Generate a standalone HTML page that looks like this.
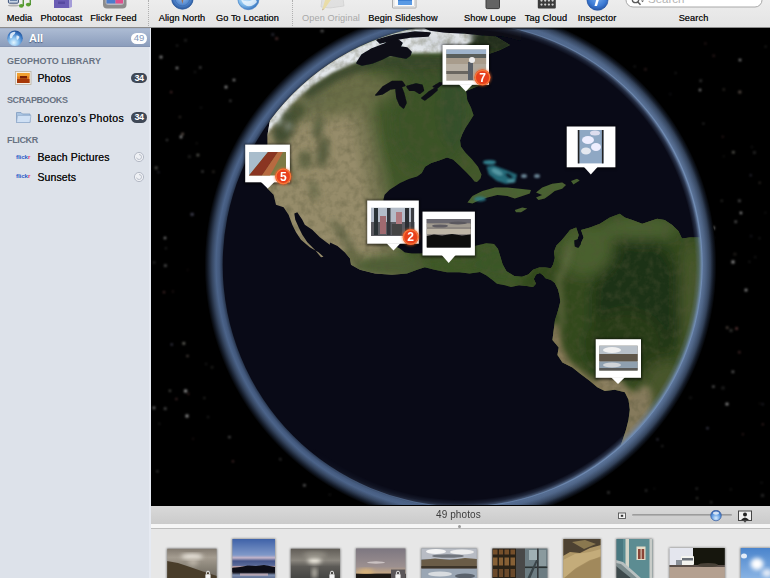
<!DOCTYPE html>
<html><head><meta charset="utf-8"><title>GeoPhoto</title>
<style>
html,body{margin:0;padding:0}
body{width:770px;height:578px;overflow:hidden;position:relative;background:#000;font-family:"Liberation Sans",sans-serif;font-size:11px;color:#111}
.abs{position:absolute}
#toolbar{left:0;top:0;width:770px;height:26.5px;background:linear-gradient(#ededed,#e4e4e4);border-bottom:1px solid #8c8c8c;box-sizing:content-box}
#toolbar .lbl{position:absolute;top:13px;font-size:9.2px;color:#1a1a1a;white-space:nowrap;transform:translateX(-50%);letter-spacing:0.1px;text-shadow:0 0 0.4px #333}
#toolbar .dis{color:#a8a8a8;text-shadow:none}
#toolbar .sep{position:absolute;top:0;height:26px;width:0;border-left:1px dotted #b0b0b0}
#sidebar{left:0;top:28px;width:149px;border-right:2px solid #e6eaf2;height:550px;background:#dde2ea}
.row{position:absolute;left:0;width:150px;white-space:nowrap}
.hdr{position:absolute;left:7px;font-size:9px;font-weight:bold;color:#687282;letter-spacing:0px;white-space:nowrap}
.item{position:absolute;left:37.5px;font-size:10.5px;color:#141414;white-space:nowrap;letter-spacing:0.1px;text-shadow:0 0 0.5px #222}
.badge{position:absolute;left:131px;width:16px;height:10.5px;border-radius:6px;background:#3f4856;color:#fff;font-weight:bold;font-size:9px;line-height:10.5px;text-align:center;letter-spacing:-0.5px}
#status{left:151px;top:505.5px;width:619px;height:18px;background:linear-gradient(#d9d9d9,#cbcbcb);border-bottom:1px solid #9a9a9a}
#split{left:151px;top:524px;width:619px;height:4px;background:#f6f6f6;border-bottom:1px solid #bdbdbd}
#strip{left:151px;top:529px;width:619px;height:49px;background:#e7e7e7}
.th{position:absolute;overflow:hidden;box-shadow:0 0 2px rgba(0,0,0,.5)}
</style></head>
<body>
<!-- TOOLBAR -->
<div id="toolbar" class="abs">
<svg style="position:absolute;left:0;top:0" width="770" height="14" viewBox="0 0 770 14">
<defs>
<filter id="ib" x="-10%" y="-10%" width="120%" height="120%"><feGaussianBlur stdDeviation="0.5"/></filter>
<radialGradient id="an" gradientUnits="userSpaceOnUse" cx="182.4" cy="-3" r="12"><stop offset="0" stop-color="#9ec4f0"/><stop offset="0.7" stop-color="#4f84cc"/><stop offset="1" stop-color="#2c5a9e"/></radialGradient>
<radialGradient id="gg" gradientUnits="userSpaceOnUse" cx="246" cy="-3" r="13"><stop offset="0" stop-color="#e4f4ff"/><stop offset="0.6" stop-color="#86c0ee"/><stop offset="1" stop-color="#3f7cc4"/></radialGradient>
<radialGradient id="ins" gradientUnits="userSpaceOnUse" cx="597.5" cy="-3" r="13"><stop offset="0" stop-color="#7ab0f0"/><stop offset="0.7" stop-color="#3c7ad4"/><stop offset="1" stop-color="#2858a8"/></radialGradient>
</defs>
<g filter="url(#ib)">
<rect x="8.4" y="-3" width="10" height="6.2" rx="1" fill="#c8d4e4" stroke="#3a5078" stroke-width="1"/><rect x="10" y="-3" width="7" height="3.6" fill="#2c4c80"/><ellipse cx="13.5" cy="5.5" rx="5.5" ry="1" fill="#9a9a9a" opacity="0.7"/><ellipse cx="21.3" cy="5.8" rx="2.4" ry="1.9" fill="#5aa030"/><ellipse cx="28.3" cy="4.6" rx="2.4" ry="1.9" fill="#5aa030"/><rect x="22.6" y="-2" width="1.3" height="8" fill="#4a9028"/><rect x="29.6" y="-3" width="1.3" height="8" fill="#4a9028"/>
<rect x="54" y="-3" width="15.5" height="11" fill="#6a5cb4"/><polygon points="69.5,-3 72,-3 72,7 69.5,8" fill="#a49cd8"/><rect x="58" y="1.5" width="7" height="2.5" fill="#5648a0"/>
<rect x="103" y="-6" width="23.5" height="14.4" rx="4" fill="#8c8c8c"/><rect x="105.5" y="-6" width="18.5" height="11" rx="3" fill="#b8b8c0"/><rect x="106.5" y="-4" width="9" height="7.5" fill="#4c7ccc"/><rect x="115.5" y="-4" width="7.5" height="7.5" fill="#e0508c"/>
<circle cx="182.4" cy="-1.6" r="10.8" fill="url(#an)" stroke="#2c5a9e" stroke-width="0.8"/><circle cx="182.4" cy="-1.6" r="7.4" fill="none" stroke="#3868ac" stroke-width="0.8" opacity="0.7"/><polygon points="180.8,-3 184,-3 182.4,4" fill="#9a7058"/>
<circle cx="248.4" cy="-0.9" r="10.6" fill="url(#gg)" stroke="#3f7cc4" stroke-width="0.6"/><path d="M241 -1 Q246 3 252 0 Q256 -2 257 2 Q253 7 247 6 Q242 4 241 -1Z" fill="#f4faff" opacity="0.75"/>
<g opacity="0.55"><polygon points="322,-2 343,-2 344,6 330,8 321,7" fill="#d8d8d8" stroke="#b0b0b0" stroke-width="0.6"/><polygon points="326,-3 333,-3 324.5,9 322.5,8.5" fill="#e8d070"/><polygon points="322.5,8.5 324.5,9 322,10.5" fill="#a08040"/></g>
<rect x="392.5" y="-3" width="23.5" height="11" rx="0.5" fill="#f4f4f4" stroke="#9a9a9a" stroke-width="0.8"/><rect x="394" y="-3" width="20.5" height="9.6" fill="#fbfbfb" stroke="#c0c0c0" stroke-width="0.5"/><rect x="398" y="-3" width="14" height="8" fill="#3c80d4"/><rect x="398" y="1" width="14" height="4" fill="#5a9ae4"/>
<rect x="486" y="-3" width="13.5" height="11.6" rx="1.2" fill="#636363" stroke="#3c3c3c" stroke-width="1"/><rect x="488" y="-3" width="9.5" height="3" fill="#7a7a7a"/>
<rect x="537.8" y="-3" width="18" height="11.6" rx="1" fill="#3a3a3a"/><circle cx="541.5" cy="0.6" r="1.15" fill="#d0d0d0"/><circle cx="545.2" cy="0.6" r="1.15" fill="#d0d0d0"/><circle cx="548.9" cy="0.6" r="1.15" fill="#d0d0d0"/><circle cx="552.6" cy="0.6" r="1.15" fill="#d0d0d0"/><circle cx="541.5" cy="4.6" r="1.15" fill="#d0d0d0"/><circle cx="545.2" cy="4.6" r="1.15" fill="#d0d0d0"/><circle cx="548.9" cy="4.6" r="1.15" fill="#d0d0d0"/><circle cx="552.6" cy="4.6" r="1.15" fill="#d0d0d0"/>
<circle cx="597.5" cy="-0.3" r="10.6" fill="url(#ins)" stroke="#2858a8" stroke-width="0.7"/><path d="M600 -4 L597 6 L594.5 6 L597.3 -4Z" fill="#fff"/>
</g>
<path d="M626 -2 L626 0 A7 7 0 0 0 633 7 L755 7 A7 7 0 0 0 762 0 L762 -2Z" fill="#fff" stroke="#a8a8a8" stroke-width="1"/><circle cx="635.5" cy="-0.5" r="3.2" fill="none" stroke="#5a5a5a" stroke-width="1.3"/><path d="M637.6 1.8 L640.5 4.8" stroke="#5a5a5a" stroke-width="1.5"/><path d="M641 0.5 l3 0 l-1.5 1.8z" fill="#5a5a5a"/><text x="648" y="3.3" font-family="Liberation Sans, sans-serif" font-size="11.5" fill="#b4b4b4">Search</text>
</svg>
 <span class="lbl" style="left:19.5px">Media</span>
 <span class="lbl" style="left:61.5px">Photocast</span>
 <span class="lbl" style="left:113.5px">Flickr Feed</span>
 <span class="sep" style="left:148px"></span>
 <span class="lbl" style="left:182px">Align North</span>
 <span class="lbl" style="left:247.5px">Go To Location</span>
 <span class="sep" style="left:292px"></span>
 <span class="lbl dis" style="left:331px">Open Original</span>
 <span class="lbl" style="left:403px">Begin Slideshow</span>
 <span class="lbl" style="left:490px">Show Loupe</span>
 <span class="lbl" style="left:546px">Tag Cloud</span>
 <span class="lbl" style="left:597px">Inspector</span>
 <span class="lbl" style="left:693.5px">Search</span>
</div>
<!-- SIDEBAR -->
<div id="sidebar" class="abs">
 <div class="row" style="top:-0.5px;height:19.5px;background:linear-gradient(#acbbd3,#8b9dbc);border-top:1px solid #a4b2ca;border-bottom:1px solid #8494b2;box-sizing:border-box"></div>
 <svg class="abs" style="left:6px;top:1px" width="18" height="18" viewBox="0 0 18 18">
  <defs><radialGradient id="gl" cx="0.42" cy="0.78" r="0.85"><stop offset="0" stop-color="#e4f6ff"/><stop offset="0.35" stop-color="#8cc4f0"/><stop offset="0.7" stop-color="#3a78c4"/><stop offset="1" stop-color="#163f80"/></radialGradient></defs>
  <circle cx="9" cy="9.2" r="7.8" fill="url(#gl)"/>
  <path d="M4.5 4.5 Q7 2.2 9.5 3 Q9 5.5 7 6.5 Q6.5 9 4.5 9.5 Q3 8 4.5 4.5 Z M10.5 6.5 Q12.5 6 13.5 8 Q12.5 10.5 11 11 Q10 9 10.5 6.5Z" fill="#f0f8ff" opacity="0.85"/>
 </svg>
 <span class="abs" style="left:29px;top:3.7px;font-size:11px;font-weight:bold;color:#fff;text-shadow:0 1px 1px rgba(40,60,100,.7)">All</span>
 <span class="badge" style="top:5.2px;background:#fff;color:#8599bb;font-weight:normal;font-size:9.5px;letter-spacing:0">49</span>

 <span class="hdr" style="top:28px">GEOPHOTO LIBRARY</span>
 <svg class="abs" style="left:15px;top:43px" width="17" height="14" viewBox="0 0 17 14">
  <rect x="0.5" y="0.5" width="15.5" height="13" fill="#f4f0e8" stroke="#b8b0a0" stroke-width="0.8"/>
  <rect x="2" y="2" width="12.5" height="10" fill="#e07818"/>
  <rect x="2" y="2" width="12.5" height="3.5" fill="#f0a030"/>
  <rect x="2" y="8" width="12.5" height="4" fill="#a83808"/>
  <rect x="5" y="5" width="7" height="2.5" fill="#7a2004"/>
 </svg>
 <span class="item" style="top:43.9px">Photos</span>
 <span class="badge" style="top:44.8px">34</span>

 <span class="hdr" style="top:67.3px;letter-spacing:-0.4px">SCRAPBOOKS</span>
 <svg class="abs" style="left:15px;top:82px" width="17" height="14" viewBox="0 0 17 14">
  <path d="M1.5 2.5 L6 2.5 L7.5 4 L15 4 L15 12.5 L1.5 12.5 Z" fill="#a9c4e2" stroke="#7f9cc0" stroke-width="0.8"/>
  <path d="M2.5 5.5 L16 5.5 L14.8 12.5 L1.5 12.5 Z" fill="#cfe0f4" stroke="#8fa8c8" stroke-width="0.6"/>
 </svg>
 <span class="item" style="top:83.6px;letter-spacing:0.35px">Lorenzo’s Photos</span>
 <span class="badge" style="top:84px">34</span>

 <span class="hdr" style="top:106.7px;letter-spacing:-0.35px">FLICKR</span>
 <span class="abs" style="left:16px;top:124.5px;font-size:6.2px;font-weight:bold;color:#2a5cc8;letter-spacing:-0.1px">flick<span style="color:#e8307c">r</span></span>
 <span class="item" style="top:122.9px">Beach Pictures</span>
 <svg class="abs" style="left:133px;top:123px" width="12" height="12" viewBox="0 0 12 12"><circle cx="6" cy="6" r="4.6" fill="#eef0f4" stroke="#b4bac6" stroke-width="1"/><path d="M6 3.5 A2.5 2.5 0 1 1 3.6 6.6" fill="none" stroke="#b4bac6" stroke-width="0.9"/></svg>
 <span class="abs" style="left:16px;top:144px;font-size:6.2px;font-weight:bold;color:#2a5cc8;letter-spacing:-0.1px">flick<span style="color:#e8307c">r</span></span>
 <span class="item" style="top:142.5px">Sunsets</span>
 <svg class="abs" style="left:133px;top:142.5px" width="12" height="12" viewBox="0 0 12 12"><circle cx="6" cy="6" r="4.6" fill="#eef0f4" stroke="#b4bac6" stroke-width="1"/><path d="M6 3.5 A2.5 2.5 0 1 1 3.6 6.6" fill="none" stroke="#b4bac6" stroke-width="0.9"/></svg>
</div>
<!-- GLOBE -->
<svg style="position:absolute;left:151px;top:28px" width="619" height="477" viewBox="151 28 619 477">
<defs>
<radialGradient id="atm" gradientUnits="userSpaceOnUse" cx="460.5" cy="264.8" r="256">
 <stop offset="0.925" stop-color="#1c2638"/>
 <stop offset="0.942" stop-color="#42587c"/>
 <stop offset="0.955" stop-color="#4c648a"/>
 <stop offset="0.972" stop-color="#34445e"/>
 <stop offset="0.988" stop-color="#141b28"/>
 <stop offset="1" stop-color="#000"/>
</radialGradient>
<radialGradient id="atm2" gradientUnits="userSpaceOnUse" cx="460.5" cy="264.8" r="254">
 <stop offset="0.93" stop-color="#6a84aa"/>
 <stop offset="0.955" stop-color="#5c7498" stop-opacity="0.9"/>
 <stop offset="0.985" stop-color="#384860" stop-opacity="0.4"/>
 <stop offset="1" stop-color="#000" stop-opacity="0"/>
</radialGradient>
<radialGradient id="haze" gradientUnits="userSpaceOnUse" cx="462.2" cy="264.8" r="239.5">
 <stop offset="0.972" stop-color="#6a86b0" stop-opacity="0"/>
 <stop offset="0.988" stop-color="#6a86b0" stop-opacity="0.35"/>
 <stop offset="1" stop-color="#7490b8" stop-opacity="0.9"/>
</radialGradient>
<linearGradient id="rm" gradientUnits="userSpaceOnUse" x1="240" y1="200" x2="660" y2="260"><stop offset="0.25" stop-color="#000"/><stop offset="1" stop-color="#fff"/></linearGradient>
<mask id="rmask" maskUnits="userSpaceOnUse" x="151" y="0" width="619" height="540"><rect x="151" y="0" width="619" height="540" fill="url(#rm)"/></mask>
<linearGradient id="landg" gradientUnits="userSpaceOnUse" x1="350" y1="142" x2="386" y2="135">
 <stop offset="0" stop-color="#968c6a"/>
 <stop offset="0.5" stop-color="#747450"/>
 <stop offset="1" stop-color="#42592a"/>
</linearGradient>
<clipPath id="disc"><circle cx="462.2" cy="264.8" r="239.5" transform="translate(0 264.8) scale(1 1.00835) translate(0 -264.8)"/></clipPath>
<filter id="b1" x="-5%" y="-5%" width="110%" height="110%"><feGaussianBlur stdDeviation="0.7"/></filter>
<filter id="b2" x="-30%" y="-30%" width="160%" height="160%"><feGaussianBlur stdDeviation="1.6"/></filter>
<filter id="b3" x="-30%" y="-30%" width="160%" height="160%"><feGaussianBlur stdDeviation="3"/></filter>
<filter id="b6" x="-30%" y="-30%" width="160%" height="160%"><feGaussianBlur stdDeviation="7"/></filter>
<filter id="bs" x="-100%" y="-100%" width="300%" height="300%"><feGaussianBlur stdDeviation="0.8"/></filter>
<filter id="bp" x="-10%" y="-10%" width="120%" height="120%"><feGaussianBlur stdDeviation="0.5"/></filter>
<filter id="tex" x="0" y="0" width="100%" height="100%"><feTurbulence type="fractalNoise" baseFrequency="0.13" numOctaves="3" seed="4" result="n"/><feColorMatrix type="matrix" values="0 0 0 0 0.09  0 0 0 0 0.09  0 0 0 0 0.04  0.8 0 0 0 -0.33"/></filter>
<filter id="sh" x="-20%" y="-20%" width="140%" height="140%"><feGaussianBlur stdDeviation="1.2"/></filter>
<clipPath id="landclip"><polygon points="240.0,126.0 258.0,100.6 278.9,77.6 302.3,57.2 328.0,39.8 355.6,25.5 384.7,14.5 414.9,7.1 445.7,3.3 476.8,3.2 507.7,6.8 470.0,10.0 470.0,27.0 495.0,36.0 510.0,45.0 500.0,50.0 489.0,54.0 489.0,82.0 466.0,91.0 467.3,100.3 471.0,107.8 473.6,115.3 470.0,121.0 465.5,127.8 462.3,134.0 460.0,140.3 460.8,146.5 465.5,152.7 471.7,159.0 478.0,166.8 481.5,174.5 480.5,178.5 477.0,182.0 474.5,181.5 471.5,177.7 465.5,171.4 459.2,165.2 453.0,159.5 447.0,157.4 439.0,160.5 431.2,162.9 425.0,166.8 421.8,173.0 417.0,176.5 409.4,178.8 400.0,183.0 389.6,189.8 384.6,194.8 383.4,199.8 385.0,215.0 388.0,230.0 393.0,245.0 399.8,248.6 404.8,252.4 412.0,253.6 421.0,253.6 430.0,250.0 440.0,235.0 455.0,232.0 468.0,240.0 474.6,246.0 480.0,244.8 486.2,243.2 494.0,244.0 497.9,248.7 500.3,256.5 502.6,264.3 506.5,271.3 514.3,276.0 522.0,276.8 528.3,274.4 533.0,269.7 539.2,267.4 545.5,267.4 551.0,268.2 553.2,264.3 554.8,258.0 554.0,251.8 556.4,245.6 561.0,240.9 565.0,236.2 570.0,229.9 576.2,227.4 578.7,234.9 576.2,243.6 580.0,244.9 583.6,237.4 581.0,229.9 590.0,227.4 599.9,223.7 609.8,217.4 619.8,213.7 624.8,217.4 632.3,219.9 642.2,223.7 649.7,221.2 657.2,218.7 664.7,219.9 672.2,224.9 678.4,231.1 682.0,238.6 689.6,237.4 722.8,237.4 724.2,263.9 722.9,290.4 719.0,316.6 712.5,342.3 703.4,367.2 691.8,391.0 677.9,413.6 661.7,434.6 643.5,453.9 623.5,471.3 618.5,448.4 621.0,444.7 623.5,437.2 626.0,429.7 628.5,419.7 629.8,409.8 628.5,399.8 624.8,392.3 614.8,389.8 604.8,391.0 597.3,387.3 589.9,381.0 579.9,373.6 572.4,367.4 562.4,362.4 557.4,354.9 558.7,347.4 552.4,340.0 553.7,330.0 555.0,320.0 557.0,314.0 558.7,307.9 560.3,301.7 559.5,295.5 557.9,289.2 554.8,283.0 551.0,279.9 545.5,278.3 543.0,275.2 540.0,272.9 536.0,274.4 533.8,279.0 536.0,283.8 533.0,286.9 526.8,286.0 519.0,285.3 511.0,286.9 505.0,285.3 497.0,283.8 492.5,279.9 486.2,275.2 480.0,272.0 469.6,273.6 459.7,272.3 447.0,272.3 434.7,269.8 424.8,267.3 417.0,269.8 407.0,273.6 392.0,274.8 375.0,273.6 360.0,269.8 351.0,264.8 350.0,258.6 345.0,252.4 337.5,246.0 330.0,242.4 329.8,244.7 319.8,237.2 312.3,229.7 304.8,224.7 302.3,219.8 297.3,212.3 294.3,213.5 295.3,219.8 298.6,227.2 302.3,234.7 307.3,242.2 314.8,249.7 321.0,257.2 323.5,256.7 318.5,252.2 309.8,247.2 301.0,239.7 296.0,232.2 292.3,224.7 288.6,214.8 283.6,207.3 276.0,204.8 273.6,194.8 267.4,188.6 267.4,145.0 267.4,135.0 270.0,120.0"/><polygon points="467.4,202.4 472.4,196.0 482.4,191.0 494.9,187.4 507.3,187.4 519.8,188.7 531.0,189.9 529.8,193.6 522.3,196.0 514.8,198.6 507.3,196.0 497.4,194.9 487.4,197.4 479.9,199.9 472.4,203.6"/><polygon points="536.0,192.4 542.2,187.4 552.2,183.7 562.2,182.4 566.0,184.9 562.2,188.7 554.7,191.0 549.7,194.9 544.7,198.6 538.5,199.9 536.0,197.4 542.2,194.9"/><polygon points="571.0,181.0 577.0,178.7 579.7,180.4 573.4,184.4"/><polygon points="514.8,209.9 522.3,207.4 527.3,208.6 521.0,212.3 516.0,212.3"/></clipPath>
</defs>
<rect x="151" y="28" width="619" height="477" fill="#000"/>
<g filter="url(#bs)"><circle cx="187.8" cy="270.0" r="0.7" fill="#f99" opacity="0.15"/><circle cx="195.1" cy="72.1" r="1.0" fill="#eee" opacity="0.14"/><circle cx="736.6" cy="328.5" r="1.2" fill="#f99" opacity="0.48"/><circle cx="182.6" cy="134.0" r="1.2" fill="#fdc" opacity="0.45"/><circle cx="212.1" cy="367.3" r="1.2" fill="#eed" opacity="0.14"/><circle cx="721.8" cy="200.8" r="0.8" fill="#eed" opacity="0.42"/><circle cx="202.5" cy="171.6" r="1.0" fill="#ddd" opacity="0.45"/><circle cx="329.7" cy="494.6" r="0.7" fill="#ddd" opacity="0.31"/><circle cx="734.9" cy="254.2" r="1.4" fill="#fdc" opacity="0.14"/><circle cx="165.9" cy="248.3" r="0.8" fill="#ddd" opacity="0.35"/><circle cx="188.4" cy="393.9" r="0.8" fill="#f99" opacity="0.40"/><circle cx="657.5" cy="439.4" r="0.9" fill="#ccf" opacity="0.39"/><circle cx="159.4" cy="423.8" r="0.8" fill="#fff" opacity="0.22"/><circle cx="229.4" cy="437.1" r="1.2" fill="#fff" opacity="0.37"/><circle cx="739.3" cy="352.3" r="1.2" fill="#f99" opacity="0.27"/><circle cx="759.5" cy="238.3" r="0.7" fill="#fff" opacity="0.25"/><circle cx="755.3" cy="257.2" r="0.9" fill="#eee" opacity="0.15"/><circle cx="739.4" cy="200.8" r="1.4" fill="#fff" opacity="0.33"/><circle cx="762.6" cy="404.3" r="1.0" fill="#ccf" opacity="0.22"/><circle cx="761.6" cy="482.6" r="0.9" fill="#eee" opacity="0.15"/><circle cx="707.5" cy="428.2" r="1.0" fill="#ccf" opacity="0.47"/><circle cx="645.4" cy="69.3" r="1.4" fill="#f99" opacity="0.17"/><circle cx="646.1" cy="490.5" r="1.0" fill="#eee" opacity="0.30"/><circle cx="230.4" cy="100.8" r="1.0" fill="#ddd" opacity="0.43"/><circle cx="165.2" cy="408.7" r="1.4" fill="#ddd" opacity="0.37"/><circle cx="232.9" cy="461.3" r="0.9" fill="#f99" opacity="0.46"/><circle cx="662.3" cy="446.1" r="0.8" fill="#fff" opacity="0.32"/><circle cx="690.5" cy="397.8" r="1.2" fill="#ddd" opacity="0.12"/><circle cx="733.3" cy="152.3" r="1.2" fill="#eed" opacity="0.46"/><circle cx="670.3" cy="94.1" r="0.7" fill="#ccf" opacity="0.27"/><circle cx="196.8" cy="143.3" r="0.7" fill="#fdc" opacity="0.20"/><circle cx="696.7" cy="488.6" r="0.8" fill="#eee" opacity="0.40"/><circle cx="762.8" cy="424.4" r="0.8" fill="#f99" opacity="0.39"/><circle cx="164.0" cy="292.2" r="1.0" fill="#f99" opacity="0.39"/><circle cx="759.8" cy="403.5" r="0.7" fill="#fdc" opacity="0.15"/><circle cx="176.4" cy="399.0" r="0.9" fill="#f99" opacity="0.41"/><circle cx="735.7" cy="221.8" r="1.2" fill="#ddd" opacity="0.47"/><circle cx="187.5" cy="355.9" r="1.0" fill="#fdc" opacity="0.46"/><circle cx="731.0" cy="330.4" r="1.6" fill="#eed" opacity="0.22"/><circle cx="193.1" cy="438.8" r="1.0" fill="#f99" opacity="0.12"/><circle cx="723.8" cy="156.2" r="0.8" fill="#eed" opacity="0.14"/><circle cx="730.8" cy="489.4" r="0.9" fill="#eed" opacity="0.14"/><circle cx="727.2" cy="327.6" r="1.2" fill="#fdc" opacity="0.41"/><circle cx="765.6" cy="46.6" r="0.7" fill="#eed" opacity="0.40"/><circle cx="750.7" cy="175.2" r="0.8" fill="#ccf" opacity="0.49"/><circle cx="762.5" cy="495.4" r="1.6" fill="#eee" opacity="0.17"/><circle cx="179.9" cy="117.0" r="0.9" fill="#fdc" opacity="0.29"/><circle cx="759.7" cy="182.7" r="0.7" fill="#fdc" opacity="0.49"/><circle cx="208.1" cy="417.1" r="0.8" fill="#fff" opacity="0.27"/><circle cx="742.9" cy="434.3" r="0.8" fill="#f99" opacity="0.37"/><circle cx="713.4" cy="386.6" r="1.2" fill="#fff" opacity="0.44"/><circle cx="171.2" cy="92.2" r="0.9" fill="#f99" opacity="0.48"/><circle cx="154.0" cy="407.9" r="1.4" fill="#eee" opacity="0.47"/><circle cx="197.9" cy="155.1" r="1.4" fill="#eed" opacity="0.41"/><circle cx="608.5" cy="492.5" r="1.0" fill="#eee" opacity="0.44"/><circle cx="189.4" cy="156.7" r="1.4" fill="#eed" opacity="0.16"/><circle cx="703.4" cy="123.6" r="0.7" fill="#fff" opacity="0.48"/><circle cx="765.3" cy="212.8" r="0.8" fill="#eee" opacity="0.15"/><circle cx="739.8" cy="92.0" r="1.6" fill="#fdc" opacity="0.36"/><circle cx="154.2" cy="262.6" r="1.0" fill="#ddd" opacity="0.27"/><circle cx="272.8" cy="34.6" r="1.4" fill="#ccf" opacity="0.23"/><circle cx="192.1" cy="214.3" r="1.6" fill="#ccf" opacity="0.34"/><circle cx="723.0" cy="387.9" r="1.6" fill="#eee" opacity="0.14"/><circle cx="183.8" cy="343.4" r="1.4" fill="#eed" opacity="0.48"/><circle cx="751.1" cy="236.2" r="0.9" fill="#ccf" opacity="0.19"/><circle cx="169.9" cy="390.8" r="1.0" fill="#eed" opacity="0.47"/><circle cx="723.8" cy="89.5" r="1.0" fill="#fdc" opacity="0.28"/><circle cx="754.4" cy="152.6" r="1.4" fill="#ddd" opacity="0.21"/><circle cx="280.3" cy="459.3" r="1.0" fill="#ddd" opacity="0.33"/><circle cx="711.2" cy="502.3" r="1.0" fill="#eed" opacity="0.28"/><circle cx="276.7" cy="38.5" r="1.6" fill="#f99" opacity="0.28"/><circle cx="675.6" cy="73.0" r="0.8" fill="#ddd" opacity="0.27"/><circle cx="654.4" cy="488.8" r="0.8" fill="#ddd" opacity="0.13"/><circle cx="749.4" cy="261.7" r="0.7" fill="#ddd" opacity="0.27"/><circle cx="751.9" cy="147.0" r="0.7" fill="#ddd" opacity="0.21"/><circle cx="732.9" cy="371.8" r="1.4" fill="#ddd" opacity="0.44"/><circle cx="204.4" cy="398.0" r="0.7" fill="#eed" opacity="0.42"/><circle cx="213.4" cy="171.7" r="1.2" fill="#fdc" opacity="0.19"/><circle cx="158.5" cy="172.2" r="1.0" fill="#ccf" opacity="0.23"/><circle cx="304.4" cy="485.3" r="1.4" fill="#fff" opacity="0.37"/><circle cx="165.4" cy="265.7" r="1.4" fill="#eee" opacity="0.37"/><circle cx="722.8" cy="136.7" r="0.7" fill="#f99" opacity="0.38"/><circle cx="156.2" cy="167.8" r="1.6" fill="#eed" opacity="0.31"/><circle cx="700.7" cy="80.8" r="1.2" fill="#ddd" opacity="0.31"/><circle cx="713.7" cy="55.8" r="1.2" fill="#f99" opacity="0.18"/><circle cx="185.5" cy="40.2" r="1.2" fill="#fff" opacity="0.17"/><circle cx="201.0" cy="107.7" r="0.8" fill="#ddd" opacity="0.19"/><circle cx="171.7" cy="344.6" r="1.0" fill="#ccf" opacity="0.44"/><circle cx="200.3" cy="67.4" r="1.0" fill="#eee" opacity="0.48"/><circle cx="206.1" cy="364.0" r="0.8" fill="#ddd" opacity="0.26"/><circle cx="705.4" cy="43.4" r="1.0" fill="#f99" opacity="0.21"/><circle cx="177.1" cy="45.6" r="0.7" fill="#fff" opacity="0.43"/><circle cx="322.1" cy="30.8" r="1.6" fill="#eee" opacity="0.35"/><circle cx="167.0" cy="140.1" r="1.0" fill="#ddd" opacity="0.39"/><circle cx="740.6" cy="212.6" r="0.9" fill="#ddd" opacity="0.47"/><circle cx="157.4" cy="471.3" r="0.9" fill="#ddd" opacity="0.43"/><circle cx="634.6" cy="66.5" r="0.8" fill="#ddd" opacity="0.27"/><circle cx="172.9" cy="291.5" r="0.9" fill="#f99" opacity="0.18"/><circle cx="697.1" cy="498.2" r="0.9" fill="#eed" opacity="0.36"/><circle cx="185.6" cy="391" r="1.8" fill="#eee" opacity="0.6"/><circle cx="187" cy="416" r="1.7" fill="#eee" opacity="0.6"/><circle cx="226" cy="87" r="1.5" fill="#eee" opacity="0.6"/><circle cx="234" cy="80" r="1.3" fill="#eee" opacity="0.6"/><circle cx="161" cy="57" r="1.5" fill="#eee" opacity="0.6"/><circle cx="177" cy="68" r="1.3" fill="#eee" opacity="0.6"/><circle cx="713" cy="228" r="1.8" fill="#eee" opacity="0.6"/><circle cx="712" cy="238" r="1.6" fill="#eee" opacity="0.6"/><circle cx="733" cy="262" r="1.7" fill="#eee" opacity="0.6"/><circle cx="746" cy="290" r="1.5" fill="#eee" opacity="0.6"/><circle cx="741" cy="213" r="1.2" fill="#eee" opacity="0.6"/><circle cx="727" cy="404" r="1.6" fill="#eee" opacity="0.6"/><circle cx="696" cy="357" r="1.3" fill="#eee" opacity="0.6"/><circle cx="181" cy="137" r="1.4" fill="#eee" opacity="0.6"/><circle cx="247" cy="182" r="1.2" fill="#eee" opacity="0.6"/><circle cx="165" cy="238" r="1.2" fill="#eee" opacity="0.6"/><circle cx="740" cy="60" r="1.3" fill="#eee" opacity="0.6"/><circle cx="700" cy="90" r="1.2" fill="#eee" opacity="0.6"/></g>
<g transform="translate(0 264.8) scale(1 1.00835) translate(0 -264.8)">
<circle cx="460.5" cy="264.8" r="256" fill="url(#atm)"/>
<circle cx="460.5" cy="264.8" r="254" fill="url(#atm2)" mask="url(#rmask)"/>
<circle cx="462.2" cy="264.8" r="239.5" fill="#090a17"/>
</g>
<g clip-path="url(#disc)">
<g filter="url(#b1)">
<polygon points="240.0,126.0 258.0,100.6 278.9,77.6 302.3,57.2 328.0,39.8 355.6,25.5 384.7,14.5 414.9,7.1 445.7,3.3 476.8,3.2 507.7,6.8 470.0,10.0 470.0,27.0 495.0,36.0 510.0,45.0 500.0,50.0 489.0,54.0 489.0,82.0 466.0,91.0 467.3,100.3 471.0,107.8 473.6,115.3 470.0,121.0 465.5,127.8 462.3,134.0 460.0,140.3 460.8,146.5 465.5,152.7 471.7,159.0 478.0,166.8 481.5,174.5 480.5,178.5 477.0,182.0 474.5,181.5 471.5,177.7 465.5,171.4 459.2,165.2 453.0,159.5 447.0,157.4 439.0,160.5 431.2,162.9 425.0,166.8 421.8,173.0 417.0,176.5 409.4,178.8 400.0,183.0 389.6,189.8 384.6,194.8 383.4,199.8 385.0,215.0 388.0,230.0 393.0,245.0 399.8,248.6 404.8,252.4 412.0,253.6 421.0,253.6 430.0,250.0 440.0,235.0 455.0,232.0 468.0,240.0 474.6,246.0 480.0,244.8 486.2,243.2 494.0,244.0 497.9,248.7 500.3,256.5 502.6,264.3 506.5,271.3 514.3,276.0 522.0,276.8 528.3,274.4 533.0,269.7 539.2,267.4 545.5,267.4 551.0,268.2 553.2,264.3 554.8,258.0 554.0,251.8 556.4,245.6 561.0,240.9 565.0,236.2 570.0,229.9 576.2,227.4 578.7,234.9 576.2,243.6 580.0,244.9 583.6,237.4 581.0,229.9 590.0,227.4 599.9,223.7 609.8,217.4 619.8,213.7 624.8,217.4 632.3,219.9 642.2,223.7 649.7,221.2 657.2,218.7 664.7,219.9 672.2,224.9 678.4,231.1 682.0,238.6 689.6,237.4 722.8,237.4 724.2,263.9 722.9,290.4 719.0,316.6 712.5,342.3 703.4,367.2 691.8,391.0 677.9,413.6 661.7,434.6 643.5,453.9 623.5,471.3 618.5,448.4 621.0,444.7 623.5,437.2 626.0,429.7 628.5,419.7 629.8,409.8 628.5,399.8 624.8,392.3 614.8,389.8 604.8,391.0 597.3,387.3 589.9,381.0 579.9,373.6 572.4,367.4 562.4,362.4 557.4,354.9 558.7,347.4 552.4,340.0 553.7,330.0 555.0,320.0 557.0,314.0 558.7,307.9 560.3,301.7 559.5,295.5 557.9,289.2 554.8,283.0 551.0,279.9 545.5,278.3 543.0,275.2 540.0,272.9 536.0,274.4 533.8,279.0 536.0,283.8 533.0,286.9 526.8,286.0 519.0,285.3 511.0,286.9 505.0,285.3 497.0,283.8 492.5,279.9 486.2,275.2 480.0,272.0 469.6,273.6 459.7,272.3 447.0,272.3 434.7,269.8 424.8,267.3 417.0,269.8 407.0,273.6 392.0,274.8 375.0,273.6 360.0,269.8 351.0,264.8 350.0,258.6 345.0,252.4 337.5,246.0 330.0,242.4 329.8,244.7 319.8,237.2 312.3,229.7 304.8,224.7 302.3,219.8 297.3,212.3 294.3,213.5 295.3,219.8 298.6,227.2 302.3,234.7 307.3,242.2 314.8,249.7 321.0,257.2 323.5,256.7 318.5,252.2 309.8,247.2 301.0,239.7 296.0,232.2 292.3,224.7 288.6,214.8 283.6,207.3 276.0,204.8 273.6,194.8 267.4,188.6 267.4,145.0 267.4,135.0 270.0,120.0" fill="url(#landg)"/>
<polygon points="467.4,202.4 472.4,196.0 482.4,191.0 494.9,187.4 507.3,187.4 519.8,188.7 531.0,189.9 529.8,193.6 522.3,196.0 514.8,198.6 507.3,196.0 497.4,194.9 487.4,197.4 479.9,199.9 472.4,203.6" fill="#4a6230"/>
<polygon points="536.0,192.4 542.2,187.4 552.2,183.7 562.2,182.4 566.0,184.9 562.2,188.7 554.7,191.0 549.7,194.9 544.7,198.6 538.5,199.9 536.0,197.4 542.2,194.9" fill="#4a6230"/>
<polygon points="571.0,181.0 577.0,178.7 579.7,180.4 573.4,184.4" fill="#4a6230"/>
<polygon points="514.8,209.9 522.3,207.4 527.3,208.6 521.0,212.3 516.0,212.3" fill="#4a6230"/>
</g>
<g clip-path="url(#landclip)">
<g filter="url(#b6)">
<ellipse cx="345" cy="96" rx="50" ry="18" fill="#6a6e46" opacity="1" transform="rotate(-14 345 96)"/>
<ellipse cx="305" cy="104" rx="28" ry="14" fill="#686c48" opacity="1" transform="rotate(-30 305 104)"/>
<ellipse cx="430" cy="125" rx="40" ry="50" fill="#3b5326" opacity="1"/>
<ellipse cx="455" cy="110" rx="16" ry="40" fill="#36502a" opacity="1"/>
<ellipse cx="490" cy="42" rx="30" ry="14" fill="#26341f" opacity="1"/>
<ellipse cx="425" cy="66" rx="48" ry="9" fill="#384a2a" opacity="1"/>
<ellipse cx="335" cy="68" rx="60" ry="9" fill="#3a4a2c" opacity="1" transform="rotate(-22 335 68)"/>
<ellipse cx="385" cy="266" rx="40" ry="9" fill="#56663a" opacity="1"/>
<ellipse cx="450" cy="268" rx="40" ry="10" fill="#3e5828" opacity="1"/>
<ellipse cx="500" cy="262" rx="30" ry="20" fill="#3a5626" opacity="1"/>
<ellipse cx="535" cy="277" rx="25" ry="8" fill="#42602a" opacity="1"/>
<ellipse cx="625" cy="320" rx="110" ry="140" fill="#314a1e" opacity="1"/>
<ellipse cx="638" cy="305" rx="46" ry="70" fill="#1f3014" opacity="1"/>
<ellipse cx="625" cy="345" rx="40" ry="35" fill="#253a18" opacity="1"/>
<ellipse cx="585" cy="250" rx="28" ry="26" fill="#4a602e" opacity="1"/>
<ellipse cx="640" cy="228" rx="40" ry="12" fill="#4c6230" opacity="1"/>
<ellipse cx="692" cy="300" rx="12" ry="60" fill="#46582c" opacity="1"/>
<ellipse cx="665" cy="400" rx="25" ry="40" fill="#46562a" opacity="1"/>
</g>
<g filter="url(#b3)">
<ellipse cx="284" cy="126" rx="11" ry="19" fill="#3f4c2e" opacity="0.95" transform="rotate(15 284 126)"/>
<ellipse cx="296" cy="112" rx="10" ry="8" fill="#465232" opacity="0.9" transform="rotate(-30 296 112)"/>
<ellipse cx="288" cy="168" rx="4" ry="16" fill="#5e6444" opacity="0.9" transform="rotate(-20 288 168)"/>
<ellipse cx="305" cy="160" rx="7" ry="10" fill="#5a6040" opacity="0.85"/>
<ellipse cx="323" cy="152" rx="6" ry="16" fill="#525a3a" opacity="0.9" transform="rotate(8 323 152)"/>
<ellipse cx="318" cy="128" rx="5" ry="12" fill="#4e5838" opacity="0.8" transform="rotate(10 318 128)"/>
<ellipse cx="314" cy="190" rx="5" ry="10" fill="#686a4a" opacity="0.8" transform="rotate(-15 314 190)"/>
<ellipse cx="343" cy="236" rx="5" ry="20" fill="#646848" opacity="0.8" transform="rotate(-35 343 236)"/>
<ellipse cx="392" cy="266" rx="36" ry="8" fill="#4e5e34" opacity="0.9"/>
<ellipse cx="352" cy="256" rx="10" ry="7" fill="#5e6440" opacity="0.8" transform="rotate(30 352 256)"/>
<polyline points="469.3,60.9 448.0,61.3 426.3,60.9 403.8,61.0 380.5,62.7 357.5,67.9 335.3,76.6 308.3,93.9" fill="none" stroke="#35452a" stroke-width="8" stroke-linecap="round" stroke-linejoin="round" opacity="0.85"/>
</g><g filter="url(#b2)">
<polygon points="259.2,133.0 267.7,120.9 276.8,109.2 286.7,98.2 297.2,87.8 308.3,78.1 320.0,69.0 332.2,60.7 344.9,53.1 358.0,46.4 371.5,40.4 385.4,35.3 399.6,31.0 414.0,27.7 428.5,25.2 443.2,23.5 458.0,22.8 472.8,23.0 487.5,24.1 486.7,32.1 473.9,41.1 462.2,47.8 447.3,52.3 424.9,53.1 401.6,53.3 377.9,56.2 354.7,62.6 332.5,72.5 311.8,85.5 287.6,107.6 264.7,136.5" fill="#e4e8ec"/>
</g><g filter="url(#b3)">
<ellipse cx="440" cy="42" rx="22" ry="7" fill="#d4d8dc" opacity="0.95"/>
<ellipse cx="492" cy="40" rx="22" ry="11" fill="#222e1e" opacity="0.95" transform="rotate(12 492 40)"/>
<ellipse cx="277" cy="117" rx="4" ry="8" fill="#e0e4e4" opacity="0.9"/>
<ellipse cx="285" cy="107" rx="3" ry="5" fill="#e0e4e4" opacity="0.8"/>
<ellipse cx="288" cy="126" rx="2.5" ry="4" fill="#d8dcdc" opacity="0.7"/>
<polyline points="553.0,330.0 556.0,350.0 565.0,366.0 585.0,382.0 600.0,392.0 625.0,394.0 629.0,420.0 620.0,447.0" fill="none" stroke="#8a7c5a" stroke-width="13" stroke-linejoin="round" stroke-linecap="round"/>
<ellipse cx="624" cy="398" rx="18" ry="10" fill="#8a7c5a" opacity="1" transform="rotate(20 624 398)"/>
<ellipse cx="637" cy="416" rx="12" ry="32" fill="#857a5c" opacity="1" transform="rotate(18 637 416)"/>
<ellipse cx="612" cy="384" rx="16" ry="8" fill="#8a7e5e" opacity="1" transform="rotate(25 612 384)"/>
<ellipse cx="560" cy="300" rx="3" ry="30" fill="#6a7048" opacity="0.8" transform="rotate(-5 560 300)"/>
<ellipse cx="566" cy="262" rx="3" ry="20" fill="#6a7048" opacity="0.7" transform="rotate(15 566 262)"/>
</g>
<rect x="151" y="28" width="619" height="477" filter="url(#tex)"/>
</g>
<g filter="url(#b1)">
<polygon points="357.0,63.0 362.0,55.0 372.0,49.0 385.0,44.0 390.0,40.0 397.0,39.0 402.0,43.0 400.0,47.0 407.0,48.0 411.0,52.0 410.0,55.0 406.0,58.0 400.0,57.0 390.0,55.0 382.0,59.0 372.0,63.0 362.0,65.0" fill="#0a0c16" stroke="#0a0c16" stroke-width="1.6" stroke-linejoin="round"/>
<polygon points="376.0,95.0 383.5,86.6 392.0,81.6 402.0,81.6 404.7,85.4 397.0,88.0 390.0,89.0 382.0,94.0" fill="#0a0c16" stroke="#0a0c16" stroke-width="1.6" stroke-linejoin="round"/>
<polygon points="396.0,89.0 401.0,86.6 403.5,93.0 406.0,103.0 403.5,108.0 400.0,105.0 397.0,98.0" fill="#0a0c16" stroke="#0a0c16" stroke-width="1.6" stroke-linejoin="round"/>
<polygon points="407.0,86.6 416.0,84.0 422.0,85.4 423.4,90.3 419.7,93.3 414.7,90.3 409.7,90.3" fill="#0a0c16" stroke="#0a0c16" stroke-width="1.6" stroke-linejoin="round"/>
<polygon points="422.0,98.0 429.6,91.6 435.9,87.9 437.0,89.8 430.9,95.3 424.7,99.8" fill="#0a0c16" stroke="#0a0c16" stroke-width="1.6" stroke-linejoin="round"/>
<polygon points="433.4,86.6 439.6,82.9 442.6,83.4 437.0,87.9" fill="#0a0c16" stroke="#0a0c16" stroke-width="1.6" stroke-linejoin="round"/>
<polygon points="575.0,241.0 578.0,240.0 580.0,244.0 578.0,247.0 575.5,246.0" fill="#0a0c16" stroke="#0a0c16" stroke-width="1.6" stroke-linejoin="round"/>
<polygon points="377.0,40.0 395.0,35.0 415.0,32.0 430.0,33.0 428.0,36.0 410.0,37.0 392.0,40.0 380.0,43.0" fill="#0a0c16" stroke="#0a0c16" stroke-width="1.6" stroke-linejoin="round"/>
<polygon points="418.0,24.0 520.0,24.0 520.0,40.0 505.0,36.0 485.0,35.0 465.0,33.0 445.0,32.0 430.0,30.0" fill="#0a0c16" stroke="#0a0c16" stroke-width="1.6" stroke-linejoin="round"/>
</g>
<g filter="url(#sh)" opacity="0.85">
<polygon points="486.5,166.8 493.5,165.2 506,169.9 517,174.5 515.3,182.3 506,183.9 496.6,180.8 488.8,174.5" fill="#2c7c8a"/>
<ellipse cx="497" cy="172" rx="6" ry="2.5" fill="#62b0bc" transform="rotate(25 497 172)"/>
<ellipse cx="509" cy="176" rx="4" ry="2" fill="#0e2030" transform="rotate(35 509 176)"/>
<ellipse cx="511" cy="181" rx="4" ry="1.8" fill="#58a8b4"/>
<ellipse cx="489.5" cy="162.3" rx="6.5" ry="2.4" fill="#3a94a2"/>
<ellipse cx="524" cy="176" rx="3" ry="2" fill="#7a9aaa"/>
<ellipse cx="537" cy="176" rx="3" ry="2" fill="#7a9aaa"/>
<ellipse cx="480" cy="199" rx="6" ry="2.6" fill="#2f7e8c"/>
</g>
</g>
<g transform="translate(0 264.8) scale(1 1.00835) translate(0 -264.8)"><circle cx="462.2" cy="264.8" r="240.5" fill="url(#haze)" mask="url(#rmask)"/></g>
<rect x="441.5" y="44" width="48.5" height="42.8" fill="#000" opacity="0.55" filter="url(#sh)"/><rect x="442.5" y="45" width="46.5" height="39.8" fill="#fff"/><polygon points="458.8,84.3 472.8,84.3 465.8,91.6" fill="#fff"/><g filter="url(#bp)"><rect x="446.3" y="49.5" width="39.8" height="31.2" fill="#b0a89c"/><rect x="446.3" y="49.5" width="39.8" height="4.5" fill="#9fb4cc"/><rect x="446.3" y="54" width="39.8" height="4" fill="#5a5f5c"/><rect x="446.3" y="58" width="39.8" height="6" fill="#a89c8c"/><rect x="446.3" y="64" width="22" height="7" fill="#b8b0a4"/><rect x="446.3" y="71" width="22" height="3" fill="#6a6660"/><rect x="468" y="62" width="5" height="18" fill="#5a6068"/><circle cx="472" cy="60" r="3" fill="#eee"/></g><circle cx="482.5" cy="77.5" r="9" fill="#f07030" opacity="0.5" filter="url(#bs)"/><circle cx="482.5" cy="77.5" r="8" fill="#e8401c"/><circle cx="482.5" cy="77.5" r="7.2" fill="none" stroke="#f47a3a" stroke-width="1.2"/><text x="482.5" y="81.8" text-anchor="middle" font-family="Liberation Sans, sans-serif" font-weight="bold" font-size="12" fill="#fff">7</text>
<rect x="244.2" y="143.6" width="46.69999999999999" height="40.70000000000002" fill="#000" opacity="0.55" filter="url(#sh)"/><rect x="245.2" y="144.6" width="44.69999999999999" height="37.70000000000002" fill="#fff"/><polygon points="260.7,181.8 274.7,181.8 267.7,188.5" fill="#fff"/><g filter="url(#bp)"><rect x="249" y="152" width="37" height="23.5" fill="#7c7a44"/><polygon points="249,152 268,152 249,175.5" fill="#a9bdcc"/><polygon points="268,152 278,152 262,175.5 249,175.5" fill="#8a3520"/><polygon points="278,152 283,152 270,175.5 262,175.5" fill="#b86a40"/></g><circle cx="283.3" cy="176.4" r="9" fill="#f07030" opacity="0.5" filter="url(#bs)"/><circle cx="283.3" cy="176.4" r="8" fill="#e8401c"/><circle cx="283.3" cy="176.4" r="7.2" fill="none" stroke="#f47a3a" stroke-width="1.2"/><text x="283.3" y="180.70000000000002" text-anchor="middle" font-family="Liberation Sans, sans-serif" font-weight="bold" font-size="12" fill="#fff">5</text>
<rect x="366.2" y="199.5" width="53.60000000000002" height="46.19999999999999" fill="#000" opacity="0.55" filter="url(#sh)"/><rect x="367.2" y="200.5" width="51.60000000000002" height="43.19999999999999" fill="#fff"/><polygon points="386.5,243.2 400.5,243.2 393.5,250.4" fill="#fff"/><g filter="url(#bp)"><rect x="371" y="207.7" width="43.4" height="28.3" fill="#b4bcc8"/><rect x="371" y="222" width="43.4" height="14" fill="#5a5a60"/><rect x="374" y="208" width="4" height="27" fill="#2c3034"/><rect x="387" y="208" width="3.5" height="27" fill="#30363a"/><rect x="405" y="208" width="4" height="27" fill="#2a2e32"/><rect x="411" y="208" width="3" height="27" fill="#3a3e42"/><rect x="380" y="216" width="6" height="18" fill="#a06a70"/><rect x="396" y="212" width="6" height="14" fill="#b07a80"/><rect x="392" y="224" width="10" height="11" fill="#444"/></g><circle cx="410.7" cy="237" r="9" fill="#f07030" opacity="0.5" filter="url(#bs)"/><circle cx="410.7" cy="237" r="8" fill="#e8401c"/><circle cx="410.7" cy="237" r="7.2" fill="none" stroke="#f47a3a" stroke-width="1.2"/><text x="410.7" y="241.3" text-anchor="middle" font-family="Liberation Sans, sans-serif" font-weight="bold" font-size="12" fill="#fff">2</text>
<rect x="421.5" y="210.6" width="54.39999999999998" height="46.900000000000006" fill="#000" opacity="0.55" filter="url(#sh)"/><rect x="422.5" y="211.6" width="52.39999999999998" height="43.900000000000006" fill="#fff"/><polygon points="441.7,255.0 455.7,255.0 448.7,263" fill="#fff"/><g filter="url(#bp)"><rect x="426.8" y="219" width="43.8" height="28.4" fill="#0c0c10"/><rect x="426.8" y="219" width="43.8" height="17" fill="#8e8882"/><rect x="426.8" y="219" width="43.8" height="4" fill="#6a6870"/><rect x="426.8" y="224" width="43.8" height="3" fill="#a09a90"/><rect x="426.8" y="229" width="43.8" height="5" fill="#beb6a6"/><ellipse cx="440" cy="226" rx="8" ry="1.6" fill="#5e5c62"/><ellipse cx="458" cy="223" rx="9" ry="1.5" fill="#5a585e"/><polygon points="426.8,236 434,234.5 442,235.5 452,234 462,235.5 470.6,234.5 470.6,247.4 426.8,247.4" fill="#0c0c10"/></g>
<rect x="565.7" y="125.5" width="50.69999999999993" height="43.80000000000001" fill="#000" opacity="0.55" filter="url(#sh)"/><rect x="566.7" y="126.5" width="48.69999999999993" height="40.80000000000001" fill="#fff"/><polygon points="583.8,166.8 597.8,166.8 590.8,174.6" fill="#fff"/><g filter="url(#bp)"><rect x="577.8" y="130" width="25.7" height="33.4" fill="#8fa8c4"/><rect x="577.8" y="130" width="1.6" height="33.4" fill="#222"/><rect x="601.9" y="130" width="1.6" height="33.4" fill="#222"/><ellipse cx="588" cy="140" rx="6" ry="4" fill="#eef"/><ellipse cx="596" cy="147" rx="5" ry="4" fill="#eef"/><ellipse cx="586" cy="151" rx="5" ry="3.5" fill="#e4e8f0"/><ellipse cx="595" cy="133" rx="5" ry="2.5" fill="#dde"/></g>
<rect x="594.7" y="338.2" width="47.299999999999955" height="41.60000000000002" fill="#000" opacity="0.55" filter="url(#sh)"/><rect x="595.7" y="339.2" width="45.299999999999955" height="38.60000000000002" fill="#fff"/><polygon points="611,377.3 625,377.3 618,384" fill="#fff"/><g filter="url(#bp)"><rect x="599.3" y="345.7" width="38.3" height="24.8" fill="#7a7468"/><rect x="599.3" y="345.7" width="38.3" height="8.5" fill="#b8c0c8"/><ellipse cx="612" cy="350" rx="9" ry="3" fill="#f0f0f0"/><rect x="599.3" y="354" width="38.3" height="7" fill="#5e5648"/><rect x="599.3" y="361.5" width="38.3" height="7" fill="#8fa0b0"/><ellipse cx="612" cy="365" rx="9" ry="2.5" fill="#d0d4d8"/><rect x="599.3" y="368" width="38.3" height="2.5" fill="#5a5a58"/></g>
<rect x="151" y="28" width="619" height="1.5" fill="#000" opacity="0.6"/>
</svg>
<!-- STATUS -->
<div id="status" class="abs">
 <span class="abs" style="left:285px;top:3.5px;font-size:10px;color:#3c3c3c;letter-spacing:0.1px;white-space:nowrap">49 photos</span>
 <svg class="abs" style="left:466px;top:4px" width="140" height="14" viewBox="617 509.5 140 14">
  <rect x="618.5" y="512.5" width="7" height="5.5" fill="#f4f4f4" stroke="#555" stroke-width="0.9"/><rect x="620.8" y="514.3" width="2.4" height="2" fill="#333"/>
  <rect x="632" y="513.8" width="100" height="2" rx="1" fill="#8a8a8a"/><rect x="632" y="515" width="100" height="1" fill="#e8e8e8" opacity="0.8"/>
  <defs><radialGradient id="kn" cx="0.5" cy="0.75" r="0.7"><stop offset="0" stop-color="#d8ecff"/><stop offset="0.6" stop-color="#5f9ae0"/><stop offset="1" stop-color="#2f5fb0"/></radialGradient></defs>
  <circle cx="716" cy="515" r="5.3" fill="url(#kn)" stroke="#3a5c9c" stroke-width="0.7"/>
  <ellipse cx="716" cy="512.6" rx="3" ry="1.6" fill="#fff" opacity="0.75"/>
  <rect x="738.5" y="510.5" width="13" height="9.5" fill="#f0f0f0" stroke="#444" stroke-width="1"/>
  <circle cx="745" cy="514" r="2" fill="#222"/><path d="M741 519.5 Q745 514.5 749 519.5Z" fill="#222"/><path d="M743.5 520.5 L746.5 520.5 L745 522.3Z" fill="#444"/>
 </svg>
</div>
<div id="split" class="abs"><span class="abs" style="left:307px;top:1px;width:3px;height:3px;border-radius:2px;background:#9a9a9a"></span></div>
<!-- STRIP -->
<div id="strip" class="abs">
<svg style="position:absolute;left:0;top:0" width="619" height="49" viewBox="151 529 619 49">
<defs>
<filter id="tb" x="-10%" y="-10%" width="120%" height="120%"><feGaussianBlur stdDeviation="0.6"/></filter>
<filter id="tb2" x="-30%" y="-30%" width="160%" height="160%"><feGaussianBlur stdDeviation="2"/></filter>
<filter id="tsh" x="-10%" y="-10%" width="120%" height="120%"><feGaussianBlur stdDeviation="1"/></filter>
<linearGradient id="t1" x1="0" y1="0" x2="0" y2="1"><stop offset="0" stop-color="#7e766c"/><stop offset="0.3" stop-color="#a49c90"/><stop offset="0.6" stop-color="#8a8478"/><stop offset="1" stop-color="#6a645c"/></linearGradient>
<linearGradient id="t2" x1="0" y1="0" x2="0" y2="1"><stop offset="0" stop-color="#3f62a8"/><stop offset="0.4" stop-color="#7f98c8"/><stop offset="0.47" stop-color="#c4b4c8"/><stop offset="0.55" stop-color="#44558a"/><stop offset="0.66" stop-color="#5a6a9a"/><stop offset="0.70" stop-color="#dcb4b0"/><stop offset="0.74" stop-color="#15151c"/><stop offset="0.84" stop-color="#1a1a24"/><stop offset="0.9" stop-color="#8090b0"/><stop offset="1" stop-color="#56668c"/></linearGradient>
<linearGradient id="t3" x1="0" y1="0" x2="0" y2="1"><stop offset="0" stop-color="#5e5a54"/><stop offset="0.4" stop-color="#8a867e"/><stop offset="0.6" stop-color="#5c5a56"/><stop offset="1" stop-color="#444442"/></linearGradient>
<linearGradient id="t4" x1="0" y1="0" x2="0" y2="1"><stop offset="0" stop-color="#7c7680"/><stop offset="0.6" stop-color="#9c9090"/><stop offset="0.8" stop-color="#c0a484"/><stop offset="0.85" stop-color="#2a2420"/><stop offset="1" stop-color="#1c1814"/></linearGradient>
<linearGradient id="t10" x1="0" y1="0" x2="0" y2="1"><stop offset="0" stop-color="#4a84cc"/><stop offset="1" stop-color="#8ab4e4"/></linearGradient>
<clipPath id="c1"><rect x="167.2" y="548.7" width="49.4" height="30"/></clipPath>
<clipPath id="c2"><rect x="232.4" y="539" width="42.6" height="40"/></clipPath>
<clipPath id="c3"><rect x="290.8" y="548.7" width="49.2" height="30"/></clipPath>
<clipPath id="c4"><rect x="356" y="548.5" width="49.4" height="30"/></clipPath>
<clipPath id="c5"><rect x="421.4" y="548.5" width="55.4" height="30"/></clipPath>
<clipPath id="c6"><rect x="492.4" y="548.5" width="55" height="30"/></clipPath>
<clipPath id="c7"><rect x="563.4" y="539" width="37.1" height="40"/></clipPath>
<clipPath id="c8"><rect x="616.4" y="539" width="36" height="40"/></clipPath>
<clipPath id="c9"><rect x="669.5" y="548" width="55.3" height="30"/></clipPath>
<clipPath id="c10"><rect x="740.7" y="548" width="30" height="30"/></clipPath>
</defs>
<rect x="166.7" y="548.4000000000001" width="50.4" height="40" fill="#000" opacity="0.45" filter="url(#tsh)"/>
<rect x="231.9" y="538.7" width="43.6" height="40" fill="#000" opacity="0.45" filter="url(#tsh)"/>
<rect x="290.3" y="548.4000000000001" width="50.2" height="40" fill="#000" opacity="0.45" filter="url(#tsh)"/>
<rect x="355.5" y="548.2" width="50.4" height="40" fill="#000" opacity="0.45" filter="url(#tsh)"/>
<rect x="420.9" y="548.2" width="56.4" height="40" fill="#000" opacity="0.45" filter="url(#tsh)"/>
<rect x="491.9" y="548.2" width="56" height="40" fill="#000" opacity="0.45" filter="url(#tsh)"/>
<rect x="562.9" y="538.7" width="38.1" height="40" fill="#000" opacity="0.45" filter="url(#tsh)"/>
<rect x="615.9" y="538.7" width="37" height="40" fill="#000" opacity="0.45" filter="url(#tsh)"/>
<rect x="669.0" y="547.7" width="56.3" height="40" fill="#000" opacity="0.45" filter="url(#tsh)"/>
<rect x="740.2" y="547.7" width="31" height="40" fill="#000" opacity="0.45" filter="url(#tsh)"/>
<g clip-path="url(#c1)"><rect x="167" y="548" width="50" height="31" fill="url(#t1)"/><ellipse cx="192" cy="556.5" rx="11" ry="2.6" fill="#f4f0e8" filter="url(#tb2)"/><ellipse cx="193" cy="562" rx="5" ry="4" fill="#c8c0b4" filter="url(#tb2)" opacity="0.7"/><polygon points="167,561 178,563 190,567 203,571.5 217,576 217,579 167,579" fill="#4a3d2c" filter="url(#tb)"/><rect x="205.4" y="574.2" width="5.2" height="4.5" rx="0.6" fill="#f4f4f4"/><path d="M206.4 574.2 v-1.4 a1.6 1.6 0 0 1 3.2 0 v1.4" fill="none" stroke="#f4f4f4" stroke-width="0.9"/></g>
<g clip-path="url(#c2)"><rect x="232" y="539" width="44" height="40" fill="url(#t2)"/><polygon points="232,568 240,567 248,565.5 256,566 264,565 275,567 275,572 232,572" fill="#111118" filter="url(#tb)"/><rect x="240" y="573.5" width="28" height="2.2" fill="#c8b0b8" filter="url(#tb)" opacity="0.8"/></g>
<g clip-path="url(#c3)"><rect x="290" y="548" width="51" height="31" fill="url(#t3)"/><ellipse cx="314.5" cy="560.5" rx="7" ry="3" fill="#f8f4e8" filter="url(#tb2)"/><ellipse cx="315" cy="555" rx="12" ry="3" fill="#9c988e" filter="url(#tb2)" opacity="0.8"/><ellipse cx="314.5" cy="573" rx="2.5" ry="6" fill="#c8c4b8" filter="url(#tb2)" opacity="0.9"/><rect x="329.4" y="574.2" width="5.2" height="4.5" rx="0.6" fill="#f4f4f4"/><path d="M330.4 574.2 v-1.4 a1.6 1.6 0 0 1 3.2 0 v1.4" fill="none" stroke="#f4f4f4" stroke-width="0.9"/></g>
<g clip-path="url(#c4)"><rect x="355" y="548" width="51" height="31" fill="url(#t4)"/><ellipse cx="376" cy="562.5" rx="9" ry="1.2" fill="#d8d0d0" filter="url(#tb)" opacity="0.8"/><ellipse cx="366" cy="572" rx="8" ry="3" fill="#e0b878" filter="url(#tb2)" opacity="0.9"/><rect x="356" y="574" width="50" height="5" fill="#1c1814"/><rect x="391" y="569.5" width="14.5" height="9" fill="#5a5658"/><rect x="395.4" y="574.2" width="5.2" height="4.5" rx="0.6" fill="#f4f4f4"/><path d="M396.4 574.2 v-1.4 a1.6 1.6 0 0 1 3.2 0 v1.4" fill="none" stroke="#f4f4f4" stroke-width="0.9"/></g>
<g clip-path="url(#c5)"><rect x="421" y="548" width="57" height="31" fill="#8e949c"/><rect x="421" y="548" width="57" height="11" fill="#b8bcc4"/><ellipse cx="436" cy="551.5" rx="10" ry="2.5" fill="#f4f4f4" filter="url(#tb)"/><ellipse cx="462" cy="552" rx="12" ry="2.5" fill="#ececec" filter="url(#tb)"/><ellipse cx="448" cy="556" rx="16" ry="1.8" fill="#70747c" filter="url(#tb)"/><polygon points="421,560 435,558.5 450,560 465,558 477,559 477,568 421,568" fill="#6a5c46" filter="url(#tb)"/><rect x="421" y="566" width="57" height="2.5" fill="#3c342a" filter="url(#tb)"/><rect x="421" y="569" width="57" height="10" fill="#9aa6b4"/><ellipse cx="440" cy="574" rx="12" ry="2.5" fill="#d8dce0" filter="url(#tb)"/><ellipse cx="465" cy="576" rx="10" ry="2.5" fill="#5a626c" filter="url(#tb)"/></g>
<g clip-path="url(#c6)" filter="url(#tb)"><rect x="492" y="548" width="56" height="31" fill="#2a2018"/><rect x="493" y="549.5" width="22" height="5" fill="#74502c"/><rect x="493" y="557.5" width="22" height="8" fill="#866034"/><rect x="493" y="569" width="22" height="8" fill="#6a4a2a"/><rect x="497.5" y="549" width="1.5" height="30" fill="#2a2018"/><rect x="503" y="549" width="1.5" height="30" fill="#2a2018"/><rect x="509" y="549" width="1.5" height="30" fill="#2a2018"/><rect x="516" y="548" width="9" height="31" fill="#4a4a48"/><rect x="525" y="548" width="23" height="31" fill="#6c7c82"/><rect x="529" y="550" width="8" height="10" fill="#a0b0b4"/><rect x="539" y="550" width="7" height="16" fill="#8a9a9e"/><rect x="525" y="566.5" width="23" height="1.6" fill="#2c3030"/><rect x="537" y="548" width="1.6" height="31" fill="#34383a"/><polygon points="527,579 536,560 538,560 530,579" fill="#3a4448"/></g>
<g clip-path="url(#c7)"><rect x="563" y="539" width="38" height="40" fill="#b09868"/><polygon points="563,539 601,539 601,545 590,548 580,553 570,552 563,556" fill="#4e4230" filter="url(#tb)"/><polygon points="572,542 585,540 596,544 584,549" fill="#8a7850" filter="url(#tb)"/><polygon points="563,560 575,554 590,552 601,549 601,556 588,562 574,570 563,579" fill="#c4ac7a" filter="url(#tb)"/><polygon points="563,579 576,568 590,560 601,557 601,579" fill="#9c8458" filter="url(#tb)" opacity="0.7"/></g>
<g clip-path="url(#c8)" filter="url(#tb)"><rect x="616" y="539" width="37" height="40" fill="#5c8c92"/><rect x="616" y="539" width="7" height="40" fill="#4a7880"/><rect x="625.5" y="539" width="3.5" height="40" fill="#d4d4c8"/><rect x="636.5" y="546.5" width="9" height="13.5" fill="#e4dcc8"/><rect x="638" y="549" width="2.6" height="10" fill="#8a4438"/><rect x="641.6" y="549" width="2.6" height="10" fill="#8a4438"/><rect x="649.5" y="539" width="3" height="40" fill="#c8ccc8"/><polygon points="616,561 622,563 640,579 616,579" fill="#7a8a8c"/><polygon points="616,566 632,579 616,579" fill="#3c4a4c"/><polygon points="616,560 623,562 642,579 638,579 621,564 616,563" fill="#b8c0c0"/></g>
<g clip-path="url(#c9)" filter="url(#tb)"><rect x="669" y="548" width="56" height="31" fill="#b4a090"/><rect x="669" y="548" width="25" height="18" fill="#e4e6ee"/><rect x="693" y="548" width="32" height="17" fill="#16160f"/><rect x="681" y="556" width="13" height="9" rx="1" fill="#f4f4f0"/><rect x="682" y="558" width="11" height="2.5" fill="#6a7078"/><rect x="676" y="560" width="6" height="5" fill="#8a9098"/><rect x="669" y="565" width="56" height="2" fill="#5a5048"/><ellipse cx="708" cy="565" rx="10" ry="2" fill="#4a4238"/></g>
<g clip-path="url(#c10)"><rect x="740" y="548" width="31" height="31" fill="url(#t10)"/><ellipse cx="757" cy="564" rx="6.5" ry="6" fill="#fff" filter="url(#tb2)"/><ellipse cx="744" cy="556" rx="3" ry="2.5" fill="#e4ecf8" filter="url(#tb)"/><ellipse cx="767" cy="573" rx="5" ry="4" fill="#e8eef8" filter="url(#tb2)"/></g>
</svg>
</div>
</body></html>
